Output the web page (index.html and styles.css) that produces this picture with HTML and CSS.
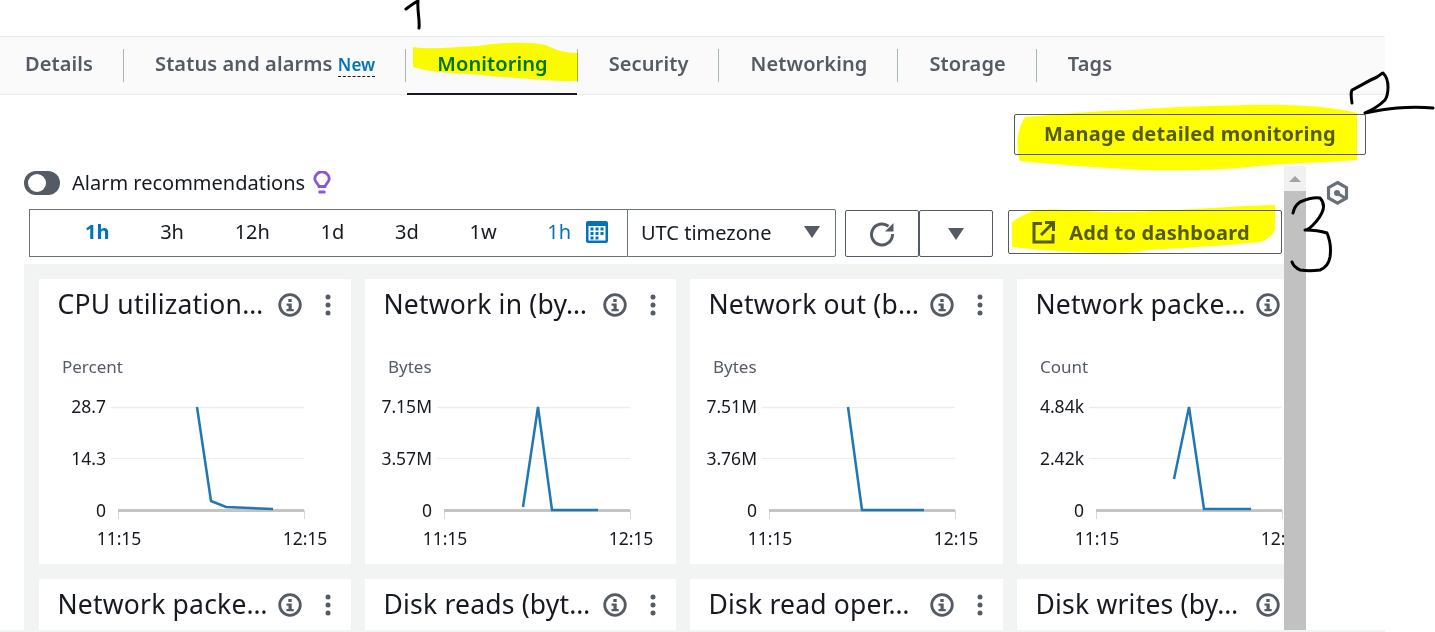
FILE: index.html
```html
<!DOCTYPE html>
<html lang="en">
<head>
    <meta charset="UTF-8">
    <title>Monitoring</title>
    <link rel="stylesheet" href="styles.css">
</head>
<body>
    <div class="page">
        <nav class="tabs">
            <a class="tab">Details</a>
            <a class="tab">Status and alarms <span class="tab-new">New</span></a>
            <a class="tab tab-active">Monitoring</a>
            <a class="tab">Security</a>
            <a class="tab">Networking</a>
            <a class="tab">Storage</a>
            <a class="tab">Tags</a>
        </nav>

        <div class="actions">
            <button class="btn btn-manage">Manage detailed monitoring</button>
        </div>

        <div class="scroll-area">
            <div class="scroll-content">
                <div class="alarm-row">
                    <span class="toggle"></span>
                    <span>Alarm recommendations</span>
                    <svg class="bulb" width="18" height="24" viewBox="0 0 18 24">
                        <path d="M6 15.500 C5 12.500 1.800 11 1.800 8 A7.200 7.200 0 0 1 16.200 8 C16.200 11 13 12.500 12 15.500 Z" fill="none" stroke="#8a55d8" stroke-width="2.800"/>
                        <path d="M5.500 21h7" stroke="#8a55d8" stroke-width="3"/>
                    </svg>
                </div>

                <div class="toolbar">
                    <div class="range">
                        <span class="range-current">1h</span>
                        <span>3h</span>
                        <span>12h</span>
                        <span>1d</span>
                        <span>3d</span>
                        <span>1w</span>
                        <span class="range-custom">1h
                            <svg width="22" height="22" viewBox="0 0 22 22">
                                <rect x="0" y="0" width="22" height="22" rx="2" fill="#0073bb"/>
                                <rect x="2.500" y="5" width="17" height="14.500" fill="#fff"/>
                                <path d="M4.500 6.500h3v3h-3zM9.500 6.500h3v3h-3zM14.500 6.500h3v3h-3zM4.500 11h3v3h-3zM9.500 11h3v3h-3zM14.500 11h3v3h-3zM4.500 15.500h3v3h-3zM9.500 15.500h3v3h-3z" fill="#0073bb"/>
                            </svg>
                        </span>
                    </div>
                    <div class="timezone">
                        <span>UTC timezone</span>
                        <span class="caret"></span>
                    </div>
                    <button class="btn btn-icon btn-refresh">
                        <svg width="26" height="26" viewBox="0 0 26 26">
                            <path d="M19.500 5.200 A10.500 10.500 0 1 0 23.500 13" fill="none" stroke="#545b64" stroke-width="3"/>
                            <path d="M24.500 2v8.500h-8.500z" fill="#545b64"/>
                        </svg>
                    </button>
                    <button class="btn btn-icon btn-more"><span class="caret"></span></button>
                    <button class="btn btn-dashboard">
                        <svg width="24" height="24" viewBox="0 0 24 24">
                            <path d="M10 3.500H2v18.500h19v-8" fill="none" stroke="#545b64" stroke-width="3"/>
                            <path d="M9 15L21 3M13 2.500h8.500v8.500" fill="none" stroke="#545b64" stroke-width="3"/>
                        </svg>
                        Add to dashboard
                    </button>
                </div>

                <div class="panel">
                    <div class="card">
                        <div class="card-head">
                            <h3 class="card-title">CPU utilization…</h3>
                            <svg class="info" width="24" height="24" viewBox="0 0 24 24"><use href="#info-icon"/></svg>
                            <svg class="dots" width="6" height="22" viewBox="0 0 6 22"><use href="#dots-icon"/></svg>
                        </div>
                        <svg class="chart" width="312" height="210" viewBox="0 0 312 210">
                            <text class="unit" x="23" y="23">Percent</text>
                            <use href="#chart-grid"/>
                            <text class="tick" x="67" y="63" text-anchor="end">28.7</text>
                            <text class="tick" x="67" y="115" text-anchor="end">14.3</text>
                            <text class="tick" x="67" y="167" text-anchor="end">0</text>
                            <polyline class="line" points="158,57 172,151 187,157 234,159"/>
                        </svg>
                    </div>
                    <div class="card">
                        <div class="card-head">
                            <h3 class="card-title">Network in (by…</h3>
                            <svg class="info" width="24" height="24" viewBox="0 0 24 24"><use href="#info-icon"/></svg>
                            <svg class="dots" width="6" height="22" viewBox="0 0 6 22"><use href="#dots-icon"/></svg>
                        </div>
                        <svg class="chart" width="312" height="210" viewBox="0 0 312 210">
                            <text class="unit" x="23" y="23">Bytes</text>
                            <use href="#chart-grid"/>
                            <text class="tick" x="67" y="63" text-anchor="end">7.15M</text>
                            <text class="tick" x="67" y="115" text-anchor="end">3.57M</text>
                            <text class="tick" x="67" y="167" text-anchor="end">0</text>
                            <polyline class="line" points="158,157 173,57 187,160 233,160"/>
                        </svg>
                    </div>
                    <div class="card">
                        <div class="card-head">
                            <h3 class="card-title">Network out (b…</h3>
                            <svg class="info" width="24" height="24" viewBox="0 0 24 24"><use href="#info-icon"/></svg>
                            <svg class="dots" width="6" height="22" viewBox="0 0 6 22"><use href="#dots-icon"/></svg>
                        </div>
                        <svg class="chart" width="312" height="210" viewBox="0 0 312 210">
                            <text class="unit" x="23" y="23">Bytes</text>
                            <use href="#chart-grid"/>
                            <text class="tick" x="67" y="63" text-anchor="end">7.51M</text>
                            <text class="tick" x="67" y="115" text-anchor="end">3.76M</text>
                            <text class="tick" x="67" y="167" text-anchor="end">0</text>
                            <polyline class="line" points="158,57 172,160 234,160"/>
                        </svg>
                    </div>
                    <div class="card">
                        <div class="card-head">
                            <h3 class="card-title">Network packe…</h3>
                            <svg class="info" width="24" height="24" viewBox="0 0 24 24"><use href="#info-icon"/></svg>
                            <svg class="dots" width="6" height="22" viewBox="0 0 6 22"><use href="#dots-icon"/></svg>
                        </div>
                        <svg class="chart" width="312" height="210" viewBox="0 0 312 210">
                            <text class="unit" x="23" y="23">Count</text>
                            <use href="#chart-grid"/>
                            <text class="tick" x="67" y="63" text-anchor="end">4.84k</text>
                            <text class="tick" x="67" y="115" text-anchor="end">2.42k</text>
                            <text class="tick" x="67" y="167" text-anchor="end">0</text>
                            <polyline class="line" points="157,129 172,57 187,159 234,159"/>
                        </svg>
                    </div>
                    <div class="card">
                        <div class="card-head">
                            <h3 class="card-title">Network packe…</h3>
                            <svg class="info" width="24" height="24" viewBox="0 0 24 24"><use href="#info-icon"/></svg>
                            <svg class="dots" width="6" height="22" viewBox="0 0 6 22"><use href="#dots-icon"/></svg>
                        </div>
                    </div>
                    <div class="card">
                        <div class="card-head">
                            <h3 class="card-title">Disk reads (byt…</h3>
                            <svg class="info" width="24" height="24" viewBox="0 0 24 24"><use href="#info-icon"/></svg>
                            <svg class="dots" width="6" height="22" viewBox="0 0 6 22"><use href="#dots-icon"/></svg>
                        </div>
                    </div>
                    <div class="card">
                        <div class="card-head">
                            <h3 class="card-title">Disk read oper…</h3>
                            <svg class="info" width="24" height="24" viewBox="0 0 24 24"><use href="#info-icon"/></svg>
                            <svg class="dots" width="6" height="22" viewBox="0 0 6 22"><use href="#dots-icon"/></svg>
                        </div>
                    </div>
                    <div class="card">
                        <div class="card-head">
                            <h3 class="card-title">Disk writes (by…</h3>
                            <svg class="info" width="24" height="24" viewBox="0 0 24 24"><use href="#info-icon"/></svg>
                            <svg class="dots" width="6" height="22" viewBox="0 0 6 22"><use href="#dots-icon"/></svg>
                        </div>
                    </div>
                </div>
            </div>

            <div class="scrollbar">
                <div class="scroll-up"><span class="scroll-arrow"></span></div>
                <div class="scroll-thumb"></div>
            </div>
        </div>
        <div class="bottom-strip"></div>
    </div>

    <!-- shared icon shapes -->
    <svg class="defs" width="0" height="0">
        <defs>
            <g id="info-icon">
                <circle cx="12" cy="12" r="10.300" fill="none" stroke="#545b64" stroke-width="2.800"/>
                <rect x="10.300" y="6" width="3.400" height="3" fill="#545b64"/>
                <path d="M8.500 10.500h5.200v5.500h2v2.300H8.500V16h2v-3.200h-2z" fill="#545b64"/>
            </g>
            <g id="dots-icon" fill="#545b64">
                <circle cx="3" cy="3" r="2.500"/>
                <circle cx="3" cy="11" r="2.500"/>
                <circle cx="3" cy="19" r="2.500"/>
            </g>
            <g id="chart-grid">
                <path d="M72 57.500H265" stroke="#eaeded" stroke-width="1.500"/>
                <path d="M72 108.500H265" stroke="#eaeded"/>
                <path d="M79.500 160v9M265.500 160v9" stroke="#d5dbdb"/>
                <path d="M79 160.500H265" stroke="#c4c4c4" stroke-width="3"/>
                <text class="tick" x="80" y="195" text-anchor="middle">11:15</text>
                <text class="tick" x="266" y="195" text-anchor="middle">12:15</text>
            </g>
        </defs>
    </svg>

    <!-- marker scribbles drawn over the screenshot -->
    <svg class="highlights" width="1435" height="632" viewBox="0 0 1435 632">
        <path d="M413 47 C430 50 450 47 478 46 C500 42 530 42 546 45 C555 50 565 53 578 53 L578 81 C555 82 520 78 490 76 C465 73 435 74 413 67 Z" fill="#ffff00"/>
        <path d="M1025 117 C1060 114 1100 111 1130 110 C1170 107 1210 106 1247 105 C1290 104 1330 106 1357 113 L1357 160 C1330 162 1300 163 1270 165 C1220 170 1190 171 1147 170 C1100 168 1060 165 1020 161 C1016 150 1016 130 1025 117 Z" fill="#ffff00"/>
        <path d="M1012 222 C1020 216 1030 212 1037 210 C1060 208 1090 212 1113 212 C1170 212 1230 206 1275 205 L1275 230 C1272 236 1266 240 1260 242 C1220 246 1180 248 1147 250 C1130 253 1118 253 1107 253 C1070 252 1040 250 1012 247 Z" fill="#ffff00"/>
    </svg>
    <svg class="scribbles" width="1435" height="632" viewBox="0 0 1435 632">
        <g fill="none" stroke="#000" stroke-width="3" stroke-linecap="round" stroke-linejoin="round">
            <path d="M406 9 C410 6 414 3 418 1 C417 10 420 20 419 28"/>
            <path d="M1352 103 C1351 97 1351 92 1352 90 C1360 86 1370 80 1377 77 C1380 75 1382 73 1383 73 C1386 76 1388 82 1388 87 C1388 93 1387 97 1385 100 C1380 105 1372 110 1365 113 C1375 111 1386 109 1397 108 C1410 107 1422 107 1433 108"/>
            <path d="M1293 213 C1294 208 1297 204 1300 202 C1307 199 1314 197 1320 198 C1323 201 1324 206 1323 210 C1321 216 1317 221 1313 225 C1310 228 1307 230 1305 230 C1313 230 1321 231 1327 233 C1330 240 1331 250 1330 257 C1329 263 1325 268 1320 270 C1313 271 1306 271 1300 270 C1296 268 1293 265 1292 262"/>
        </g>
        <path d="M1337.500 182.500 L1346.500 187.700 V198 L1337.500 203.200 L1328.500 198 V187.700 Z" fill="none" stroke="#687078" stroke-width="3.200"/>
        <path d="M1337 193l8 5" stroke="#687078" stroke-width="3"/>
        <circle cx="1337" cy="193" r="3" fill="#687078"/>
    </svg>
</body>
</html>
```

FILE: styles.css
```css
html, body {
    margin: 0;
    height: 100%;
    overflow: hidden;
    background: #fff;
}
body {
    font-family: "Noto Sans", "Liberation Sans", sans-serif;
    color: #16191f;
    position: relative;
}
.page {
    height: 632px;
    display: flex;
    flex-direction: column;
    overflow: hidden;
}

/* tabs */
.tabs {
    margin-top: 36px;
    width: 1385px;
    height: 57px;
    background: #fafafa;
    border-top: 1px solid #eaeded;
    border-bottom: 1px solid #eaeded;
    display: flex;
    align-items: center;
    flex-shrink: 0;
}
.tab {
    font-size: 20px;
    font-weight: 600;
    letter-spacing: .1px;
    color: #545b64;
    padding: 0 30px 0 31px;
    height: 33px;
    line-height: 30px;
    border-right: 1px solid #aab7b8;
    white-space: nowrap;
    position: relative;
}
.tab:first-child {
    padding-left: 25px;
}
.tab:last-child {
    border-right: none;
}
.tab-new {
    font-size: 17px;
    color: #0073bb;
    border-bottom: 1px dashed #16191f;
}
.tab-active {
    color: #0073bb;
    padding-right: 29px;
}
.tab-active::after {
    content: "";
    position: absolute;
    left: 1px;
    right: 0;
    bottom: -13px;
    height: 2px;
    background: #16191f;
}

/* buttons */
.actions {
    height: 71px;
    display: flex;
    justify-content: flex-end;
    align-items: flex-start;
    padding: 19px 69px 0 0;
    box-sizing: border-box;
    flex-shrink: 0;
}
.btn {
    font-family: inherit;
    background: #fff;
    border: 1px solid #545b64;
    border-radius: 2px;
    color: #545b64;
    font-size: 20px;
    font-weight: 700;
    letter-spacing: .25px;
    display: flex;
    align-items: center;
    justify-content: center;
    padding: 0;
}
.btn-manage {
    width: 352px;
    height: 41px;
    padding-bottom: 3px;
}

/* scrolling region */
.scroll-area {
    flex: 1;
    min-height: 0;
    display: flex;
    width: 1306px;
}
.scroll-content {
    width: 1284px;
    padding-left: 24px;
    box-sizing: border-box;
    overflow: hidden;
}
.alarm-row {
    height: 33px;
    display: flex;
    align-items: center;
    gap: 8px;
    font-size: 20px;
    white-space: nowrap;
}
.toggle {
    width: 36px;
    height: 24px;
    border-radius: 12px;
    background: #545b64;
    position: relative;
    margin-right: 4px;
}
.toggle::after {
    content: "";
    position: absolute;
    left: 4px;
    top: 3px;
    width: 18px;
    height: 18px;
    border-radius: 50%;
    background: #fff;
}

.toolbar {
    height: 65px;
    padding-top: 10px;
    box-sizing: border-box;
    display: flex;
    align-items: flex-start;
    font-size: 20px;
}
.range {
    margin-left: 5px;
    width: 598px;
    height: 48px;
    box-sizing: border-box;
    border: 1px solid #687078;
    border-right: none;
    display: flex;
    align-items: center;
    padding: 0 0 3px 55px;
    gap: 50.700px;
}
.range-current {
    color: #0073bb;
    font-weight: 700;
}
.range-custom {
    color: #0073bb;
    display: flex;
    align-items: center;
    gap: 15px;
}
.timezone {
    width: 209px;
    height: 48px;
    box-sizing: border-box;
    border: 1px solid #687078;
    border-radius: 0 2px 2px 0;
    display: flex;
    align-items: center;
    justify-content: space-between;
    padding: 0 15px 2px 13px;
}
.caret {
    width: 0;
    height: 0;
    border-left: 8px solid transparent;
    border-right: 8px solid transparent;
    border-top: 12px solid #545b64;
}
.btn-icon {
    height: 47px;
    width: 74px;
    margin-top: 1px;
}
.btn-refresh {
    margin-left: 9px;
}
.btn-dashboard {
    width: 274px;
    height: 44px;
    margin: 1px 0 0 15px;
    padding-right: 8px;
    gap: 13px;
}

/* widget panel */
.panel {
    background: #f2f3f3;
    padding: 15px 0 0 15px;
    display: grid;
    grid-template-columns: 312px 311px 313px 312px;
    grid-auto-rows: 285px;
    gap: 15px 14px;
    height: 400px;
    overflow: hidden;
}
.card {
    background: #fff;
    overflow: hidden;
}
.card-head {
    display: flex;
    align-items: center;
    height: 52px;
    padding: 0 20px 0 18.500px;
    gap: 12px;
}
.card-title {
    flex: 1;
    min-width: 0;
    margin: 0 0 3px;
    font-size: 26.500px;
    font-weight: 400;
    letter-spacing: .2px;
    white-space: nowrap;
}
.info {
    flex-shrink: 0;
}
.dots {
    flex-shrink: 0;
    margin-left: 11px;
}
.chart {
    display: block;
    margin-top: 19px;
}
.unit {
    font-size: 17px;
    fill: #545b64;
}
.tick {
    font-size: 17.500px;
    fill: #16191f;
}
.line {
    fill: none;
    stroke: #1f77b4;
    stroke-width: 2.500;
}
.defs {
    position: absolute;
}

/* fake scrollbar */
.scrollbar {
    width: 22px;
    background: #f1f1f1;
    flex-shrink: 0;
    overflow: hidden;
}
.scroll-up {
    height: 25px;
    display: flex;
    justify-content: center;
    align-items: center;
}
.scroll-arrow {
    width: 0;
    height: 0;
    border-left: 6px solid transparent;
    border-right: 6px solid transparent;
    border-bottom: 6px solid #a3a3a3;
}
.scroll-thumb {
    height: 500px;
    background: #c1c1c1;
}
.bottom-strip {
    height: 2px;
    width: 1385px;
    background: #f2f3f3;
    flex-shrink: 0;
}

/* overlays */
.highlights, .scribbles {
    position: absolute;
    left: 0;
    top: 0;
    pointer-events: none;
}
.highlights {
    mix-blend-mode: multiply;
}
```
